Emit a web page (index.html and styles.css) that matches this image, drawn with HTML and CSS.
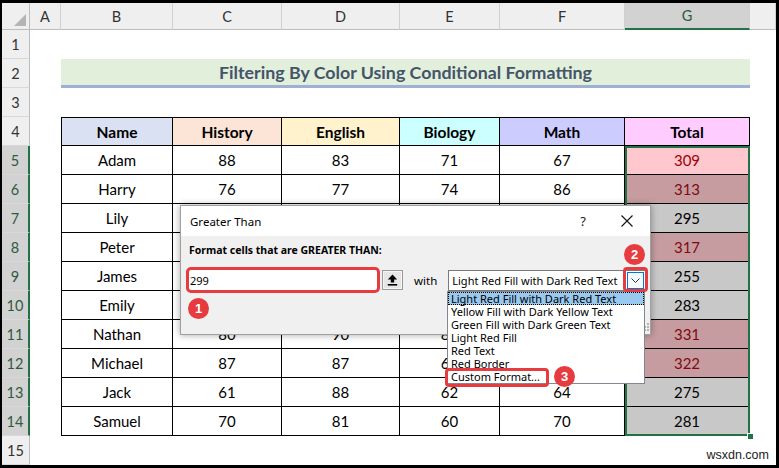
FILE: index.html
```html
<!DOCTYPE html>
<html>
<head>
<meta charset="utf-8">
<link rel="stylesheet" href="styles.css">
</head>
<body>
<div class="frame">
  <div class="sheet">
    <div class="corner"><span class="tri"></span></div>
    <div class="ch">A</div><div class="ch">B</div><div class="ch">C</div><div class="ch">D</div><div class="ch">E</div><div class="ch">F</div><div class="ch sel">G</div><div class="ch"></div>

    <div class="rh">1</div><div class="span"></div>

    <div class="rh">2</div><div></div><div class="title">Filtering By Color Using Conditional Formatting</div><div></div>

    <div class="rh">3</div><div class="span"></div>

    <div class="rh">4</div><div></div>
    <div class="th first h-name">Name</div><div class="th h-hist">History</div><div class="th h-eng">English</div><div class="th h-bio">Biology</div><div class="th h-math">Math</div><div class="th h-tot">Total</div><div></div>

    <div class="rh sel">5</div><div></div>
    <div class="t first">Adam</div><div class="t">88</div><div class="t">83</div><div class="t">71</div><div class="t">67</div><div class="t lr">309</div><div></div>

    <div class="rh sel">6</div><div></div>
    <div class="t first">Harry</div><div class="t">76</div><div class="t">77</div><div class="t">74</div><div class="t">86</div><div class="t dr">313</div><div></div>

    <div class="rh sel">7</div><div></div>
    <div class="t first">Lily</div><div class="t"></div><div class="t"></div><div class="t"></div><div class="t"></div><div class="t gr">295</div><div></div>

    <div class="rh sel">8</div><div></div>
    <div class="t first">Peter</div><div class="t"></div><div class="t"></div><div class="t"></div><div class="t"></div><div class="t dr">317</div><div></div>

    <div class="rh sel">9</div><div></div>
    <div class="t first">James</div><div class="t"></div><div class="t"></div><div class="t"></div><div class="t"></div><div class="t gr">255</div><div></div>

    <div class="rh sel">10</div><div></div>
    <div class="t first">Emily</div><div class="t"></div><div class="t"></div><div class="t"></div><div class="t"></div><div class="t gr">283</div><div></div>

    <div class="rh sel">11</div><div></div>
    <div class="t first">Nathan</div><div class="t">80</div><div class="t">90</div><div class="t">81</div><div class="t"></div><div class="t dr">331</div><div></div>

    <div class="rh sel">12</div><div></div>
    <div class="t first">Michael</div><div class="t">87</div><div class="t">87</div><div class="t">68</div><div class="t"></div><div class="t dr">322</div><div></div>

    <div class="rh sel">13</div><div></div>
    <div class="t first">Jack</div><div class="t">61</div><div class="t">88</div><div class="t">62</div><div class="t">64</div><div class="t gr">275</div><div></div>

    <div class="rh sel">14</div><div></div>
    <div class="t first">Samuel</div><div class="t">70</div><div class="t">81</div><div class="t">60</div><div class="t">70</div><div class="t gr">281</div><div></div>

    <div class="rh">15</div><div class="span"></div>
  </div>

  <div class="selection"></div>
  <div class="handle"></div>

  <div class="dialog">
    <div class="dlg-title">
      <span>Greater Than</span>
      <span class="dlg-ctrls">
        <span class="q">?</span>
        <svg class="close" width="12" height="12" viewBox="0 0 12 12"><path d="M0.5 0.5L11.5 11.5M11.5 0.5L0.5 11.5" stroke="#111" stroke-width="1.1" fill="none"/></svg>
      </span>
    </div>
    <div class="dlg-body">
      <div class="dlg-label">Format cells that are GREATER THAN:</div>
      <div class="dlg-row">
        <div class="val">299</div>
        <div class="refbtn"><svg width="11" height="12" viewBox="0 0 11 12"><path d="M5.5 0.5L0.8 5.6H3.8V8.6H7.2V5.6H10.2Z" fill="#000"/><rect x="0.8" y="10" width="9.4" height="1.6" fill="#000"/></svg></div>
        <span class="with">with</span>
        <div class="select"><span>Light Red Fill with Dark Red Text</span><span class="drop"><svg width="9" height="5" viewBox="0 0 9 5"><path d="M0.5 0.5L4.5 4.5L8.5 0.5" fill="none" stroke="#333" stroke-width="1"/></svg></span></div>
      </div>
    </div>
    <svg class="grip" width="10" height="10" viewBox="0 0 10 10"><g fill="#B5B5B5"><rect x="8" y="2" width="2" height="2"/><rect x="5" y="5" width="2" height="2"/><rect x="8" y="5" width="2" height="2"/><rect x="2" y="8" width="2" height="2"/><rect x="5" y="8" width="2" height="2"/><rect x="8" y="8" width="2" height="2"/></g></svg>
  </div>

  <ul class="dd">
    <li class="hl">Light Red Fill with Dark Red Text</li>
    <li>Yellow Fill with Dark Yellow Text</li>
    <li>Green Fill with Dark Green Text</li>
    <li>Light Red Fill</li>
    <li>Red Text</li>
    <li>Red Border</li>
    <li>Custom Format...</li>
  </ul>

  <div class="rbox box-drop"></div>
  <div class="rbox box-custom"></div>
  <div class="badge b1">1</div>
  <div class="badge b2">2</div>
  <div class="badge b3">3</div>

  <div class="watermark">wsxdn.com</div>
</div>
</body>
</html>
```

FILE: styles.css
```css
* { box-sizing: border-box; }
body { margin: 0; background: #fff; }

.frame {
  position: relative;
  width: 779px;
  height: 468px;
  border-style: solid;
  border-color: #000;
  border-width: 3px 3px 3px 2px;
  overflow: hidden;
  font-family: Lato, "Liberation Sans", sans-serif;
  background: #fff;
}

.sheet {
  display: grid;
  grid-template-columns: 28px 31px 112px 109px 118px 100px 125px 125px 1fr;
  grid-template-rows: 27px repeat(15, 29px);
}

.corner {
  background: #EFEFEF;
  border-right: 1px solid #BDBDBD;
  border-bottom: 1px solid #BDBDBD;
  display: flex;
  align-items: flex-end;
  justify-content: flex-end;
  padding: 0 3px 3px 0;
}
.tri {
  width: 0; height: 0;
  border-left: 12px solid transparent;
  border-bottom: 12px solid #B4B4B4;
}

.ch {
  background: #EFEFEF;
  border-right: 1px solid #D0D0D0;
  border-bottom: 1px solid #BDBDBD;
  display: flex;
  align-items: center;
  justify-content: center;
  font-size: 14.5px;
  color: #333;
}
.ch.sel {
  background: #D2D2D2;
  border-bottom: 2px solid #217346;
  color: #2a5a3c;
}

.rh {
  background: #EFEFEF;
  border-right: 1px solid #BDBDBD;
  border-bottom: 1px solid #D8D8D8;
  display: flex;
  align-items: center;
  justify-content: center;
  font-size: 14.5px;
  color: #333;
}
.rh.sel {
  background: #D2D2D2;
  border-right: 2px solid #217346;
  color: #2f5a40;
}

.span { grid-column: 2 / -1; }

.title {
  grid-column: 3 / 9;
  background: #E2EFDA;
  border-bottom: 3px solid #9EB0D6;
  display: flex;
  align-items: center;
  justify-content: center;
  font-weight: 700;
  font-size: 17.8px;
  color: #44546A;
}

.th, .t {
  display: flex;
  align-items: center;
  justify-content: center;
  border-right: 1px solid #000;
  border-bottom: 1px solid #000;
  color: #000;
}
.th {
  border-top: 1px solid #000;
  font-weight: 700;
  font-size: 15.5px;
}
.t { font-size: 15px; }
.first { border-left: 1px solid #000; }

.h-name { background: #D9E1F2; }
.h-hist { background: #FCE4D6; }
.h-eng  { background: #FFF2CC; }
.h-bio  { background: #CCFFFF; }
.h-math { background: #CCCCFF; }
.h-tot  { background: #FFCCFF; }

.lr { background: #FFC7CE; color: #9C0006; }
.dr { background: #C69CA0; color: #7E0A10; }
.gr { background: #C8C8C8; color: #000; }

.selection {
  position: absolute;
  left: 623px;
  top: 143px;
  width: 125px;
  height: 290px;
  border: 2px solid #217346;
}
.handle {
  position: absolute;
  left: 745px;
  top: 430px;
  width: 7px;
  height: 7px;
  background: #217346;
  border: 1px solid #fff;
}

/* Dialog */
.dialog {
  position: absolute;
  left: 178px;
  top: 202px;
  width: 471px;
  height: 130px;
  border: 1px solid #A0A0A0;
  background: #F0F0F0;
  box-shadow: 0 0 7px rgba(0,0,0,0.35);
  font-family: "Noto Sans", "Liberation Sans", sans-serif;
  display: flex;
  flex-direction: column;
}
.dlg-title {
  height: 30px;
  flex: none;
  background: #fff;
  display: flex;
  align-items: center;
  justify-content: space-between;
  padding-left: 9px;
  font-size: 11.5px;
  color: #000;
}
.dlg-ctrls {
  display: flex;
  align-items: center;
  gap: 35px;
  margin-right: 17px;
}
.q { font-size: 13px; color: #222; }
.close { display: block; }

.dlg-body {
  flex: 1;
  padding: 6px 0 0 5px;
}
.dlg-label {
  padding-left: 3px;
  font-weight: 700;
  font-size: 10.5px;
  line-height: 16px;
  color: #000;
}
.dlg-row {
  display: flex;
  align-items: center;
  margin-top: 9px;
}
.val {
  width: 194px;
  height: 26px;
  border: 3px solid #E63B3F;
  border-radius: 5px;
  background: #fff;
  padding-left: 1px;
  display: flex;
  align-items: center;
  font-size: 11px;
}
.refbtn {
  margin-left: 2px;
  width: 21px;
  height: 20px;
  border: 1px solid #9A9A9A;
  background: #E6E6E6;
  box-shadow: inset 0 0 0 1px #F5F5F5;
  display: flex;
  align-items: center;
  justify-content: center;
}
.with {
  margin-left: 11px;
  font-size: 11.5px;
}
.select {
  margin-left: 11px;
  width: 198px;
  height: 21px;
  border: 1px solid #7A7A7A;
  background: #fff;
  display: flex;
  align-items: center;
  justify-content: space-between;
  padding-left: 3px;
  padding-right: 1px;
  font-size: 11px;
  white-space: nowrap;
}
.drop {
  width: 17px;
  height: 17px;
  border: 1px solid #0078D7;
  background: #F4F9FD;
  display: flex;
  align-items: center;
  justify-content: center;
}
.grip {
  position: absolute;
  right: 1px;
  bottom: 3px;
}

.dd {
  position: absolute;
  left: 445px;
  top: 288px;
  width: 198px;
  margin: 0;
  padding: 0;
  list-style: none;
  border: 1px solid #828790;
  background: #fff;
  font-family: "Noto Sans", "Liberation Sans", sans-serif;
  font-size: 11px;
}
.dd li {
  height: 13px;
  line-height: 13px;
  padding-left: 3px;
  white-space: nowrap;
  color: #000;
}
.dd li.hl {
  background: #99C9EF;
  outline: 1px dotted #000;
  outline-offset: -1px;
}

.rbox {
  position: absolute;
  border: 3px solid #E63B3F;
  border-radius: 4px;
}
.box-drop { left: 621px; top: 264px; width: 25px; height: 25px; }
.box-custom { left: 443px; top: 365px; width: 104px; height: 19px; }

.badge {
  position: absolute;
  width: 21px;
  height: 21px;
  border-radius: 50%;
  background: #E63B3F;
  color: #fff;
  font-family: "Liberation Sans", sans-serif;
  font-weight: 700;
  font-size: 13px;
  display: flex;
  align-items: center;
  justify-content: center;
}
.b1 { left: 186px; top: 295px; }
.b2 { left: 622px; top: 241px; }
.b3 { left: 552px; top: 363px; }

.watermark {
  position: absolute;
  right: 7px;
  bottom: 3px;
  font-family: "Liberation Sans", sans-serif;
  font-size: 12.5px;
  color: #222;
}
```
